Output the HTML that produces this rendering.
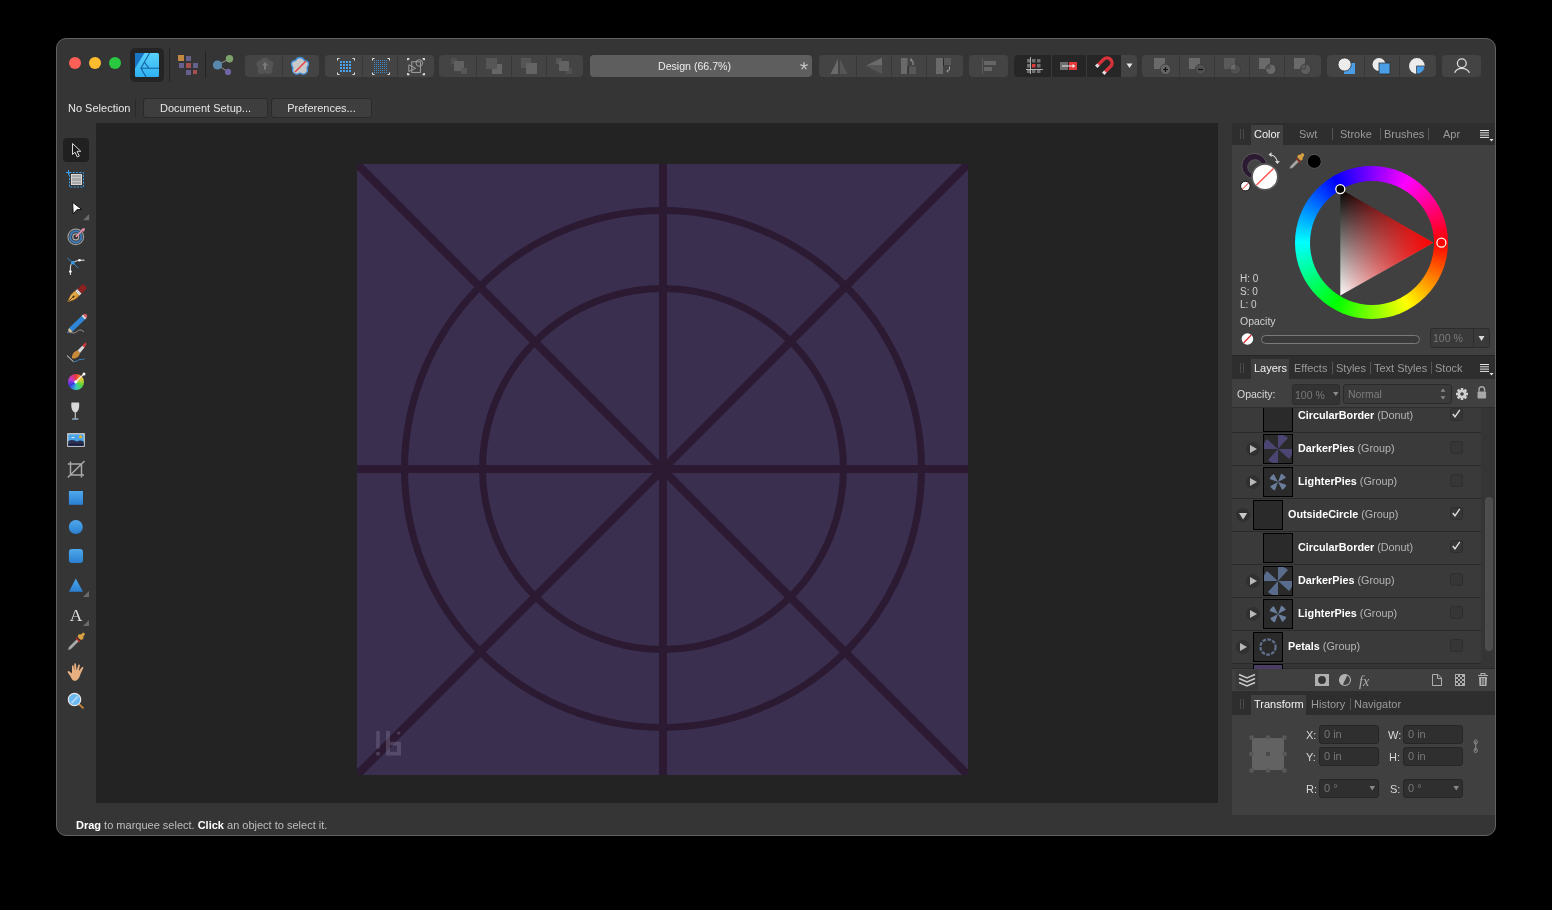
<!DOCTYPE html>
<html><head><meta charset="utf-8">
<style>
*{margin:0;padding:0;box-sizing:border-box}
html,body{width:1552px;height:910px;background:#000;overflow:hidden;font-family:"Liberation Sans",sans-serif;}
.a{position:absolute}
#win{left:56px;top:38px;width:1440px;height:798px;background:#353535;border:1px solid #616161;border-radius:10px;overflow:hidden}
.t{position:absolute;white-space:nowrap;line-height:1}
.t,.lname,.lbl,.fld,.btn,svg{will-change:transform}
.tl{position:absolute;width:12px;height:12px;border-radius:50%;top:57px}
.grp{position:absolute;top:55px;height:22px;background:#444;border-radius:4px}
.dv{position:absolute;top:0;width:1px;height:22px;background:#383838}
.btn{position:absolute;top:98px;height:20px;background:#3e3e3e;border:1px solid #2a2a2a;border-radius:3px;color:#e6e6e6;font-size:11px;text-align:center;line-height:18px}
.tabbar{position:absolute;left:1232px;width:263px;background:#2e2e2e}
.tab{position:absolute;top:0;height:100%;color:#9a9a9a;font-size:11px;line-height:22px}
.tab.on{background:#404040;color:#f0f0f0}
.tsep{position:absolute;width:1px;background:#5a5a5a}
.panel{position:absolute;left:1232px;width:263px;background:#404040}
.row{position:absolute;left:1232px;width:249px;height:33px;background:#3b3b3b;border-bottom:1px solid #2c2c2c}
.thumb{position:absolute;width:30px;height:30px;background:#2a2a2a;border:1px solid #000}
.lname{position:absolute;font-size:10.8px;color:#fff;font-weight:bold;line-height:1;white-space:nowrap}
.lname span{font-weight:normal;color:#b5b5b5}
.chk{position:absolute;left:1450px;width:13px;height:13px;border-radius:3px;background:#363636;border:1px solid #2e2e2e}
.exp{position:absolute;width:14px;height:14px;border-radius:50%;background:#303030}
.exp:after{content:"";position:absolute;left:4px;top:3px;border-left:7px solid #b8b8b8;border-top:4px solid transparent;border-bottom:4px solid transparent}
.fld{position:absolute;height:19px;background:#2f2f2f;border-radius:3px;border:1px solid #262626;color:#777;font-size:11px;line-height:17px;padding-left:4px}
.lbl{position:absolute;color:#d8d8d8;font-size:11px;line-height:1}
</style></head><body>
<div id="win" class="a"></div>

<!-- traffic lights -->
<div class="tl" style="left:69px;background:#fe5f57"></div>
<div class="tl" style="left:89px;background:#febc2e"></div>
<div class="tl" style="left:109px;background:#28c840"></div>


<!-- TOOLBAR -->
<div class="a" style="left:130px;top:48px;width:34px;height:34px;background:#242424;border-radius:5px"></div>
<div class="a" style="left:169px;top:48px;width:1px;height:34px;background:#232323"></div>
<div class="a" style="left:205px;top:51px;width:1px;height:27px;background:#232323"></div>
<div class="grp" style="left:245px;width:74px"><div class="dv" style="left:37px"></div></div>
<div class="grp" style="left:325px;width:109px"><div class="dv" style="left:37px"></div><div class="dv" style="left:72px"></div></div>
<div class="grp" style="left:439px;width:144px"><div class="dv" style="left:37px"></div><div class="dv" style="left:72px"></div><div class="dv" style="left:107px"></div></div>
<div class="grp" style="left:590px;width:222px;background:#5e5e5e"></div>
<div class="t" style="left:658px;top:61px;font-size:10.6px;color:#ececec">Design (66.7%)</div>
<div class="grp" style="left:819px;width:144px"><div class="dv" style="left:37px"></div><div class="dv" style="left:72px"></div><div class="dv" style="left:107px"></div></div>
<div class="grp" style="left:969px;width:39px"></div>
<div class="grp" style="left:1014px;width:123px;background:#444"><div class="a" style="left:0;top:0;width:107px;height:22px;background:#262626;border-radius:4px 0 0 4px"></div><div class="dv" style="left:37px;background:#3a3a3a"></div><div class="dv" style="left:72px;background:#3a3a3a"></div></div>
<div class="grp" style="left:1142px;width:179px"><div class="dv" style="left:37px"></div><div class="dv" style="left:72px"></div><div class="dv" style="left:107px"></div><div class="dv" style="left:142px"></div></div>
<div class="grp" style="left:1327px;width:109px"><div class="dv" style="left:37px"></div><div class="dv" style="left:72px"></div></div>
<div class="grp" style="left:1442px;width:39px"></div>

<svg class="a" style="left:0;top:0" width="1552" height="130" viewBox="0 0 1552 130">
<defs>
<linearGradient id="lg1" x1="0" y1="0" x2="0" y2="1"><stop offset="0" stop-color="#58d3fb"/><stop offset="1" stop-color="#2fb0f2"/></linearGradient>
</defs>
<!-- affinity logo -->
<rect x="135" y="53" width="24" height="24" rx="1.5" fill="url(#lg1)"/>
<path d="M135 53 H144.5 L135 68.5 Z" fill="#1a75c4"/>
<path d="M149.5 53 L141 68.3 L146 77 M141 68.3 H159 M144.3 62 L149 68.3" stroke="#15609f" stroke-width="1.1" fill="none"/>
<!-- persona grid -->
<rect x="178" y="55" width="6" height="6" fill="#c08840"/>
<rect x="186" y="56" width="5" height="5" fill="#66618c"/>
<rect x="179" y="63" width="5" height="5" fill="#66618c"/>
<rect x="186" y="63" width="5" height="5" fill="#a84f4f"/>
<rect x="193" y="63" width="5" height="5" fill="#66618c"/>
<rect x="186" y="70" width="5" height="5" fill="#66618c"/>
<rect x="193" y="70" width="4" height="4" fill="#a84f4f"/>
<!-- share -->
<path d="M217.5 65 L229.5 58.7 M217.5 65 L228 71.9" stroke="#9a9a9a" stroke-width="1"/>
<circle cx="217.5" cy="65" r="4.6" fill="#5a88ac"/>
<circle cx="229.5" cy="58.7" r="3.7" fill="#7ea36a"/>
<circle cx="228" cy="71.9" r="3.1" fill="#6f67a6"/>
<!-- flower icons -->
<defs><path id="flw" d="M265 57.5 C268 57.5 269 59.5 269.5 60.5 C271 60.5 274 61.5 273.5 64.5 C273 66.5 272.5 67.5 272 68 C273 70 272.5 73 269.5 74 C268 74.5 266.5 74 265 73 C263.5 74 262 74.5 260.5 74 C257.5 73 257 70 258 68 C257.5 67.5 257 66.5 256.5 64.5 C256 61.5 259 60.5 260.5 60.5 C261 59.5 262 57.5 265 57.5 Z"/></defs><use href="#flw" fill="#545454"/>
<path d="M265 62 L262 65.5 H264 V69.5 H266 V65.5 H268 Z" fill="#7a7a7a"/>
<use href="#flw" x="35" fill="#c9c9c9" stroke="#3d8fdb" stroke-width="1.3"/>
<path d="M306 61 L295 72" stroke="#e8383a" stroke-width="1.2"/>
<!-- grid buttons -->
<g fill="#4aa3ec">
<rect x="340" y="61" width="2" height="2"/><rect x="343" y="61" width="2" height="2"/><rect x="346" y="61" width="2" height="2"/><rect x="349" y="61" width="2" height="2"/>
<rect x="340" y="64" width="2" height="2"/><rect x="343" y="64" width="2" height="2"/><rect x="346" y="64" width="2" height="2"/><rect x="349" y="64" width="2" height="2"/>
<rect x="340" y="67" width="2" height="2"/><rect x="343" y="67" width="2" height="2"/><rect x="346" y="67" width="2" height="2"/><rect x="349" y="67" width="2" height="2"/>
<rect x="340" y="70" width="2" height="2"/><rect x="343" y="70" width="2" height="2"/><rect x="346" y="70" width="2" height="2"/><rect x="349" y="70" width="2" height="2"/>
</g>
<g fill="#3d8fd6" opacity="0.9">
<rect x="374" y="60" width="14" height="14" fill="url(#dots)"/>
</g>
<pattern id="dots" width="2" height="2" patternUnits="userSpaceOnUse"><rect width="1" height="1" fill="#3d8fd6"/></pattern>
<path d="M337.5 60.5 V58.5 H339.5 M352.5 58.5 H354.5 V60.5 M354.5 72.5 V74.5 H352.5 M339.5 74.5 H337.5 V72.5" stroke="#e6e6e6" stroke-width="1" fill="none"/>
<path d="M372.5 60.5 V58.5 H374.5 M387.5 58.5 H389.5 V60.5 M389.5 72.5 V74.5 H387.5 M374.5 74.5 H372.5 V72.5" stroke="#e6e6e6" stroke-width="1" fill="none"/>
<path d="M407.8 60.2 V58.8 H409.4 M422.6 58.8 H424.2 V60.2 M424.2 73 V74.5 H422.6 M409.4 74.5 H407.8 V73" stroke="#e6e6e6" stroke-width="1.4" fill="none"/>
<g stroke="#a8a8a8" stroke-width="0.9" fill="none">
<rect x="411.8" y="61.8" width="8.6" height="10.6"/>
<circle cx="419.3" cy="63" r="3.3"/>
<path d="M408.8 64.8 V71.5 L415.6 68.3 Z"/>
</g>
<!-- arrange -->
<rect x="451" y="58" width="6" height="6" fill="#505050"/>
<rect x="454" y="61" width="10" height="10" fill="#616161"/>
<rect x="461" y="68" width="6" height="6" fill="#575757"/>
<rect x="492" y="64" width="10" height="10" fill="#666"/>
<rect x="486" y="58" width="11" height="11" fill="#565656"/>
<rect x="521" y="58" width="10" height="10" fill="#555"/>
<rect x="526" y="63" width="11" height="11" fill="#646464"/>
<rect x="556" y="58" width="6" height="6" fill="#555"/>
<rect x="566" y="68" width="6" height="6" fill="#505050"/>
<rect x="559" y="61" width="10" height="10" fill="#626262"/>
<!-- asterisk -->
<path d="M804.0 66.0 L804.00 62.50 M804.0 66.0 L807.33 64.92 M804.0 66.0 L806.06 68.83 M804.0 66.0 L801.94 68.83 M804.0 66.0 L800.67 64.92" stroke="#c8c8c8" stroke-width="1.25" stroke-linecap="round"/>
<!-- flip icons -->
<path d="M838 59 V74 H830.5 Z" fill="#6a6a6a"/>
<path d="M840 59 V74 H847.5 Z" fill="#555"/>
<path d="M866 65.5 L882 57.7 V65.5 Z" fill="#6a6a6a"/>
<path d="M866 66 L882 74 V66 Z" fill="#555"/>
<rect x="901" y="58" width="6.5" height="16" fill="#6a6a6a"/>
<rect x="909" y="66.5" width="7" height="7.5" fill="#585858"/>
<rect x="907.5" y="66" width="1" height="8" fill="#2a2a2a"/>
<path d="M913 65 V61.5 C913 60.5 912 60 910.5 60 M911.8 58.6 L910.3 60 L911.8 61.4" stroke="#a0a0a0" stroke-width="1" fill="none"/>
<rect x="936" y="58" width="7" height="16" fill="#6a6a6a"/>
<rect x="944" y="58" width="7" height="7" fill="#585858"/>
<rect x="943" y="58" width="1" height="8" fill="#2a2a2a"/>
<path d="M949.5 66.5 V69.5 C949.5 70.5 948.5 71 947 71 M948.3 69.6 L946.8 71 L948.3 72.4" stroke="#a0a0a0" stroke-width="1" fill="none"/>
<!-- align -->
<rect x="982" y="58" width="1" height="16" fill="#5a5a5a"/>
<rect x="984" y="61" width="12" height="4" fill="#666"/>
<rect x="984" y="67" width="8" height="4" fill="#666"/>
<!-- snapping grid -->
<g fill="#707070">
<rect x="1027" y="59" width="3.5" height="3.5"/><rect x="1032" y="59" width="3.5" height="3.5"/><rect x="1037" y="59" width="3.5" height="3.5"/>
<rect x="1027" y="64" width="3.5" height="3.5"/><rect x="1037" y="64" width="3.5" height="3.5"/>
<rect x="1027" y="69.5" width="3.5" height="3.5"/><rect x="1032" y="69.5" width="3.5" height="3.5"/><rect x="1037" y="69.5" width="3.5" height="3.5"/>
</g>
<rect x="1032" y="64" width="3.5" height="3.5" fill="#e23a3c"/>
<path d="M1030.5 57 V74 M1026 69.5 H1043" stroke="#d0d0d0" stroke-width="0.8"/>
<rect x="1060" y="62" width="8" height="8" fill="#6e6e6e"/>
<rect x="1069" y="62" width="8" height="8" fill="#e23a3c"/>
<path d="M1062 66 H1074" stroke="#eee" stroke-width="1"/>
<path d="M1072.5 64 L1075.5 66 L1072.5 68 Z" fill="#eee"/>
<!-- magnet -->
<path d="M1098.2 64.8 L1103.6 59.4 A4.95 4.95 0 0 1 1110.6 66.4 L1105.2 71.8" stroke="#d8333a" stroke-width="3.4" fill="none"/>
<path d="M1096.2 66.8 L1098.4 64.6 M1103.2 73.8 L1105.4 71.6" stroke="#e0e0e0" stroke-width="3.4"/>
<path d="M1126.5 63.5 H1132.5 L1129.5 68 Z" fill="#e6e6e6"/>
<!-- boolean -->
<g>
<rect x="1154" y="58" width="11" height="11" fill="#6a6a6a"/>
<circle cx="1165.5" cy="69.3" r="5.2" fill="#666" stroke="#3a3a3a" stroke-width="0.8"/>
<path d="M1163 69.5 H1168 M1165.5 67 V72" stroke="#111" stroke-width="1.2"/>
<rect x="1189" y="58" width="11" height="11" fill="#6a6a6a"/>
<circle cx="1200.5" cy="69.3" r="5.2" fill="#505050" stroke="#3a3a3a" stroke-width="0.8"/>
<path d="M1198 69.5 H1203" stroke="#111" stroke-width="1.2"/>
<rect x="1224" y="58" width="11" height="11" fill="#5a5a5a"/>
<circle cx="1235.4" cy="69.3" r="5.2" fill="#505050" stroke="#3a3a3a" stroke-width="0.8"/>
<path d="M1230.5 69 A5 5 0 0 1 1235 64 V69 Z" fill="#6a6a6a"/>
<rect x="1259" y="58" width="11" height="11" fill="#6a6a6a"/>
<circle cx="1270.8" cy="69.3" r="5.2" fill="#6a6a6a" stroke="#3a3a3a" stroke-width="0.8"/>
<path d="M1266 69 A5 5 0 0 1 1270.5 64 V69 Z" fill="#505050"/>
<rect x="1294" y="58" width="11" height="11" fill="#6a6a6a"/>
<circle cx="1305.6" cy="69.3" r="5.2" fill="#5e5e5e" stroke="#3a3a3a" stroke-width="0.8"/>
<path d="M1301 69 A5 5 0 0 1 1305.5 64 V69 Z" fill="#5a5a5a" stroke="#3a3a3a" stroke-width="0.6"/>
</g>
<!-- arrange 2 -->
<rect x="1344" y="63" width="11" height="11" fill="#4a9ee6"/>
<circle cx="1344.6" cy="64.5" r="6.6" fill="#ececec" stroke="#2f2f2f" stroke-width="0.8"/>
<circle cx="1379" cy="64.5" r="6.5" fill="#ececec"/>
<rect x="1379" y="63" width="11" height="11" fill="#4a9ee6" stroke="#2f2f2f" stroke-width="0.8"/>
<circle cx="1416.9" cy="66" r="7.9" fill="#ececec"/>
<path d="M1416.5 66 H1424.8 A7.9 7.9 0 0 1 1416.5 73.9 Z" fill="#4a9ee6" stroke="#2f2f2f" stroke-width="0.7"/>
<!-- user -->
<circle cx="1461.8" cy="63.3" r="4.4" stroke="#dcdcdc" stroke-width="1.3" fill="none"/>
<path d="M1454.6 72.8 C1456 69.5 1458.5 68.3 1461.8 68.3 C1465 68.3 1467.8 69.5 1469.5 72.8" stroke="#dcdcdc" stroke-width="1.3" fill="none"/>
</svg>

<!-- TOOLS -->
<div class="a" style="left:63px;top:138px;width:25.5px;height:24px;background:#202020;border-radius:4px"></div>
<svg class="a" style="left:56px;top:130px" width="40" height="590" viewBox="56 130 40 590">
<defs>
<linearGradient id="bl" x1="0" y1="0" x2="0" y2="1"><stop offset="0" stop-color="#4fa9ec"/><stop offset="1" stop-color="#2a7fd0"/></linearGradient>
<linearGradient id="gold" x1="0" y1="0" x2="1" y2="1"><stop offset="0" stop-color="#f5d07a"/><stop offset="1" stop-color="#d08a20"/></linearGradient>
</defs>
<!-- pointer -->
<path d="M72.5 143.5 V154.5 L75 152.2 L77.3 157 L79.3 156 L77 151.3 H80.8 Z" fill="#1a1a1a" stroke="#d8d8d8" stroke-width="1" stroke-linejoin="round"/>
<!-- artboard -->
<rect x="69.5" y="172.5" width="14" height="14.5" fill="none" stroke="#3aa0ee" stroke-width="1" stroke-dasharray="2 1.3"/>
<rect x="71.5" y="174.5" width="10" height="10" fill="#a8a8a8" stroke="#d8d8d8" stroke-width="1"/>
<path d="M72 177.5 H81 M72 181.5 H81" stroke="#d0d0d0" stroke-width="0.8"/>
<path d="M68.5 170 V175 M66 172.5 H71" stroke="#3aa0ee" stroke-width="1"/>
<!-- node tool -->
<path d="M72.6 202.3 L81.8 209.4 L76.8 209.8 L73.2 214 Z" fill="#fafafa" stroke="#111" stroke-width="1" stroke-linejoin="round"/>
<path d="M83 220.2 H89.2 V214 Z" fill="#6a6a6a"/>
<!-- contour -->
<circle cx="75.8" cy="236.9" r="7.8" fill="none" stroke="#9a9a9a" stroke-width="1.2"/>
<circle cx="75.8" cy="236.9" r="5.6" fill="none" stroke="#3d7cbc" stroke-width="2"/>
<circle cx="75.8" cy="236.9" r="3" fill="none" stroke="#aaaaaa" stroke-width="1.2"/>
<path d="M75.8 236.9 L83 229.8" stroke="#e890a8" stroke-width="1.6"/>
<path d="M85 228 L81 229 L84 232 Z" fill="#e890a8"/>
<!-- corner tool -->
<path d="M67.4 258 L78.3 268" stroke="#3a8cd0" stroke-width="1"/>
<path d="M70.4 275 V268 C70.4 265 71.5 263 73 262.5 C75 261 79 260 84.5 260.2" stroke="#e8e8e8" stroke-width="1" fill="none"/>
<rect x="71.3" y="261" width="3.3" height="3.3" fill="#3a9ae8"/>
<circle cx="79.5" cy="260.2" r="1.3" fill="#fff"/>
<circle cx="70.4" cy="271.5" r="1.3" fill="#fff"/>
<!-- pen -->
<g transform="translate(67.6 302) rotate(-42.4)">
<path d="M0 0 L6 -2.6 C8 -3.4 11 -3.4 13 -3.1 V3.1 C11 3.4 8 3.4 6 2.6 Z" fill="url(#gold)" stroke="#a86a18" stroke-width="0.5"/>
<path d="M0.5 0 H8" stroke="#4a3010" stroke-width="0.8"/>
<circle cx="8" cy="0" r="1" fill="#3a2a10"/>
<rect x="13" y="-3.1" width="3" height="6.2" fill="#e8e8e8"/>
<path d="M14.5 -3 V3" stroke="#888" stroke-width="0.5"/>
<path d="M16 -3.1 H22 C23.5 -3.1 24 -2 24 0 C24 2 23.5 3.1 22 3.1 H16 Z" fill="#8a2222"/>
</g>
<!-- pencil -->
<path d="M67.5 333 L69 328 L81.5 316 L85 319.5 L72.5 331.5 Z" fill="#2f86d6"/>
<path d="M67.5 333 L69 328 L72.5 331.5 Z" fill="#e8c080"/>
<path d="M67.5 333 L68.2 330.8 L69.7 332.3 Z" fill="#2a5aa0"/>
<path d="M81.5 316 L83 314.5 L86.5 318 L85 319.5 Z" fill="#d8d8d8"/>
<path d="M83 314.5 C84 313.5 85.5 313.5 86.5 314.5 C87.5 315.5 87.5 317 86.5 318 Z" fill="#e05a6a"/>
<path d="M70 332.5 C73 333 75 333.5 77 331.5 C79 329.5 81.5 329.3 84 332" stroke="#aaaaaa" stroke-width="0.8" fill="none"/>
<!-- brush -->
<path d="M67 355.5 L73.5 361.8" stroke="#e0e0e0" stroke-width="1"/>
<path d="M72 358.5 C71.5 354.5 74 351 77.5 350.5 L80 353 C79.5 356.5 76 359 72 358.5 Z" fill="#c88a3a"/>
<path d="M77.5 350.5 L82.5 345.5 L84.5 347.5 L80 353 Z" fill="#d8d8d8"/>
<path d="M82.5 345.5 L85.5 342.5 C86 342 86.5 344 86 345 L84.5 347.5 Z" fill="#e03a3a"/>
<path d="M74 361.5 C77 362 78 359.5 80 359.5 C82 359.5 83 360 84.5 358.5" stroke="#3a8cd0" stroke-width="0.9" fill="none"/>
<!-- color wheel -->
<foreignObject x="67.9" y="373.9" width="15.8" height="15.8"><div style="width:15.8px;height:15.8px;border-radius:50%;background:conic-gradient(from 0deg,#e83838,#e8c838,#58d838,#38c8c8,#3838e8,#c838c8,#e83838)"></div></foreignObject>
<path d="M75.8 381.8 L84 373.9" stroke="#f0f0f0" stroke-width="1.2"/>
<circle cx="75.8" cy="381.8" r="1.6" fill="#fff"/>
<circle cx="84" cy="373.9" r="1.5" fill="#fff"/>
<!-- glass -->
<path d="M71.5 402.5 H79 C79.5 406 79.5 411 75.3 413 C71 411 71 406 71.5 402.5 Z" fill="#d8d8d8"/>
<path d="M75.3 413 V418.5 M72 419 H78.5" stroke="#c8c8c8" stroke-width="1.1"/>
<path d="M73 419.2 H77.5" stroke="#5aa0e0" stroke-width="0.8"/>
<!-- image -->
<rect x="67.2" y="433.2" width="17.6" height="13.6" fill="#dcdcdc"/>
<rect x="68.3" y="434.3" width="15.4" height="11.4" fill="#4aa4e8"/>
<path d="M68.3 441 C72 439 75 440.5 77 441.5 C79.5 440 81.5 440.5 83.7 441.5 V445.7 H68.3 Z" fill="#2a3050"/>
<rect x="68.3" y="443.8" width="15.4" height="1.9" fill="#1a1a3a"/>
<circle cx="80.5" cy="436.8" r="1.5" fill="#f5b020"/>
<path d="M71 438 C72 436.5 74 436.8 75 437.8 Z" fill="#fff"/>
<!-- crop -->
<path d="M70.5 461.5 V475 H84 M67.8 464 H81.5 V477.5 M67.8 477.5 L84.5 461" stroke="#a8a8a8" stroke-width="1.5" fill="none"/>
<!-- rect -->
<rect x="68.9" y="491" width="14.1" height="13.8" fill="url(#bl)"/>
<!-- ellipse -->
<circle cx="75.8" cy="527" r="7" fill="url(#bl)"/>
<!-- rounded rect -->
<rect x="68.9" y="549" width="14.1" height="14" rx="3" fill="url(#bl)"/>
<!-- triangle -->
<path d="M75.8 578.4 L83 591.8 H68.9 Z" fill="url(#bl)"/>
<path d="M83 597 H89 V591 Z" fill="#6a6a6a"/>
<!-- text -->
<text x="76" y="621.3" font-family="Liberation Serif" font-size="17.5" fill="#dedede" text-anchor="middle">A</text>
<path d="M83 626 H89 V620 Z" fill="#6a6a6a"/>
<!-- eyedropper -->
<path d="M68 650 L69 647 L77 639 L79 641 L71 649 Z" fill="#a8a8a8" stroke="#707070" stroke-width="0.5"/>
<path d="M76 638 L80 642" stroke="#c02020" stroke-width="1.3"/>
<path d="M78 637.5 C77 635.5 79 633.5 81 634.5 L82.5 633 C84 632 85.5 633.5 84.5 635 L83.2 636.5 C84.3 638.5 82.3 640.5 80.3 639.5 Z" fill="#d8a040"/>
<!-- hand -->
<path d="M70.5 676.5 L67.8 672.5 C67.3 671.7 68.3 670.7 69.2 671.3 L72 673.5 V666 C72 665 73.5 665 73.6 666 L74.3 671 V664 C74.3 663 76 663 76 664 L76.6 670.5 L78.3 665 C78.6 664 80 664.3 79.9 665.3 L78.7 671 L81.9 667.2 C82.5 666.5 83.8 667.2 83.3 668 L80.5 674 C79.5 677.5 78 680.8 74.5 680.8 C72.5 680.8 71.5 678.5 70.5 676.5 Z" fill="#e8b080"/>
<!-- zoom -->
<path d="M78.8 704 L83.5 708.3" stroke="#c8843a" stroke-width="1.8"/>
<circle cx="74.5" cy="699.5" r="6.2" fill="#6ab8f0" stroke="#e8e8e8" stroke-width="1.2"/>
<path d="M71.5 703 L78 696.5" stroke="#c8e4fa" stroke-width="2" opacity="0.7"/>
</svg>

<!-- canvas -->
<div class="a" style="left:96px;top:123px;width:1122px;height:680px;background:#232323"></div>
<svg class="a" style="left:357px;top:164px" width="611" height="611" viewBox="0 0 611 611">
  <rect width="611" height="611" fill="#3b2f4f"/>
  <g stroke="#2c1a33" fill="none">
    <line x1="0" y1="0" x2="611" y2="611" stroke-width="8"/>
    <line x1="611" y1="0" x2="0" y2="611" stroke-width="8"/>
    <line x1="306" y1="0" x2="306" y2="611" stroke-width="8"/>
    <line x1="0" y1="305" x2="611" y2="305" stroke-width="8"/>
    <circle cx="306" cy="305" r="258.5" stroke-width="7"/>
    <circle cx="306" cy="305" r="180.5" stroke-width="7"/>
  </g>
  <g fill="#9286a9" opacity="0.32" transform="translate(-357 -164)">
    <rect x="376.2" y="731" width="3.6" height="17.6"/>
    <rect x="376.2" y="752" width="3.6" height="3.5"/>
    <path d="M386 731 H390 V741.7 H401 V755.5 H386 Z M390 745.6 V751.8 H397 V745.6 Z" fill-rule="evenodd"/>
    <rect x="397.2" y="731.8" width="3" height="2.6"/>
  </g>
</svg>

<!-- context toolbar -->
<div class="t" style="left:68px;top:103px;font-size:11px;color:#e8e8e8">No Selection</div>
<div class="a" style="left:135px;top:99px;width:1px;height:19px;background:#2a2a2a"></div>
<div class="btn" style="left:143px;width:125px">Document Setup...</div>
<div class="btn" style="left:271px;width:101px">Preferences...</div>

<!-- status bar -->
<div class="t" style="left:76px;top:820px;font-size:11px;color:#bdbdbd"><b style="color:#fff">Drag</b> to marquee select. <b style="color:#fff">Click</b> an object to select it.</div>

<!-- RIGHT PANEL -->
<div class="tabbar" style="top:123px;height:22px"></div>
<div class="panel" style="top:145px;height:210px"></div>
<div class="a" style="left:1232px;top:355px;width:263px;height:1px;background:#262626"></div>
<div class="tabbar" style="top:356px;height:23px"></div>
<div class="panel" style="top:379px;height:29px"></div>
<div class="a" style="left:1232px;top:408px;width:263px;height:256px;background:#353535"></div>
<div class="a" style="left:1232px;top:664px;width:263px;height:5px;background:#353535"></div><div class="a" style="left:1232px;top:668px;width:263px;height:1px;background:#2a2a2a"></div><div class="panel" style="top:669px;height:22px;background:#404040"></div><div class="a" style="left:1236px;top:670px;width:22px;height:20px;background:#393939"></div>
<div class="tabbar" style="top:691px;height:24px"></div>
<div class="panel" style="top:715px;height:100px"></div>

<!-- COLOR PANEL -->
<div class="a" style="left:1251px;top:125px;width:32px;height:20px;background:#404040"></div>
<div class="t" style="left:1254px;top:129px;font-size:11px;color:#f2f2f2">Color</div>
<div class="t" style="left:1299px;top:129px;font-size:11px;color:#9a9a9a">Swt</div>
<div class="a" style="left:1332px;top:128px;width:1px;height:12px;background:#555"></div>
<div class="t" style="left:1340px;top:129px;font-size:11px;color:#9a9a9a">Stroke</div>
<div class="a" style="left:1380px;top:128px;width:1px;height:12px;background:#555"></div>
<div class="t" style="left:1384px;top:129px;font-size:11px;color:#9a9a9a">Brushes</div>
<div class="a" style="left:1428px;top:128px;width:1px;height:12px;background:#555"></div>
<div class="t" style="left:1443px;top:129px;font-size:11px;color:#9a9a9a">Apr</div>
<div class="a" style="left:1332px;top:128px;width:1px;height:12px;background:#555"></div>
<div class="t" style="left:1240px;top:316px;font-size:10.5px;color:#cfcfcf">Opacity</div>
<div class="t" style="left:1240px;top:272px;font-size:10px;color:#cfcfcf;line-height:13.2px">H: 0<br>S: 0<br>L: 0</div>
<div class="a" style="left:1261px;top:335px;width:159px;height:9px;border:1px solid #7a7a7a;border-radius:5px;background:#3a3a3a"></div>
<div class="a" style="left:1430px;top:328px;width:60px;height:20px;border:1px solid #2c2c2c;border-radius:3px;background:#3a3a3a"></div>
<div class="a" style="left:1473px;top:329px;width:1px;height:18px;background:#2c2c2c"></div>
<div class="t" style="left:1433px;top:333px;font-size:10.5px;color:#7a7a7a">100 %</div>
<div class="a" style="left:1295px;top:166px;width:153px;height:153px;border-radius:50%;background:conic-gradient(from 90deg,#ff0000,#ffff00,#00ff00,#00ffff,#0000ff,#ff00ff,#ff0000)"></div>
<div class="a" style="left:1309.5px;top:180.5px;width:124px;height:124px;border-radius:50%;background:#404040"></div>
<svg class="a" style="left:1232px;top:145px" width="263" height="210" viewBox="1232 145 263 210">
<defs>
<linearGradient id="tri1" gradientUnits="userSpaceOnUse" x1="1340" y1="242.5" x2="1433" y2="242.5"><stop offset="0" stop-color="#ff0000" stop-opacity="0"/><stop offset="1" stop-color="#ff0000" stop-opacity="1"/></linearGradient>
<linearGradient id="tri2" gradientUnits="userSpaceOnUse" x1="1340" y1="189" x2="1340" y2="296"><stop offset="0" stop-color="#000"/><stop offset="1" stop-color="#fff"/></linearGradient>
</defs>
<path d="M1340.3 189.1 L1433.4 242.7 L1340.3 295.5 Z" fill="url(#tri2)"/>
<path d="M1340.3 189.1 L1433.4 242.7 L1340.3 295.5 Z" fill="url(#tri1)" style="mix-blend-mode:normal"/>
<circle cx="1340.3" cy="189.1" r="4.5" fill="#000" stroke="#fff" stroke-width="1.3"/>
<circle cx="1441.4" cy="242.7" r="4.5" fill="none" stroke="#fff" stroke-width="1.3"/>
<!-- swatches -->
<circle cx="1254.3" cy="166" r="12.6" fill="#2c1a33" stroke="#5a5a5a" stroke-width="1"/>
<circle cx="1255" cy="167" r="7.3" fill="#444" stroke="#5a5a5a" stroke-width="0.9"/>
<circle cx="1264.9" cy="176.9" r="13.6" fill="#404040"/>
<circle cx="1264.9" cy="176.9" r="13.1" fill="none" stroke="#5e5e5e" stroke-width="1.1"/>
<circle cx="1264.9" cy="176.9" r="12.1" fill="#fff"/>
<path d="M1256.5 185 L1273.5 168.5" stroke="#ff4a4a" stroke-width="1.3"/>
<circle cx="1245.4" cy="186.1" r="4.8" fill="#fff" stroke="#111" stroke-width="1"/>
<path d="M1242.3 189.3 L1248.5 183" stroke="#e02020" stroke-width="1"/>
<path d="M1270 154.8 C1273 154.8 1276 157.5 1277.5 161.5" stroke="#d8d8d8" stroke-width="1.1" fill="none"/>
<path d="M1268.5 154.5 L1271.5 152.3 L1271.5 157 Z M1275 161 L1280 161.3 L1277.3 164 Z" fill="#d8d8d8"/>
<!-- eyedropper -->
<path d="M1289.5 168.5 L1290.5 166 L1297 159.5 L1299 161.5 L1292.5 168 Z" fill="#a8a8a8" stroke="#606060" stroke-width="0.4"/>
<path d="M1296 158.3 L1300.5 162.8" stroke="#a02a20" stroke-width="1.2"/>
<path d="M1297.5 157.5 C1297 155.5 1298.5 154.5 1300 155 L1301.5 153.6 C1303 152.5 1305 154.5 1304 156 L1302.6 157.6 C1303.4 159.4 1302 160.8 1300.3 160.5 Z" fill="#d8a040"/>
<circle cx="1314.3" cy="161.4" r="7" fill="#000" stroke="#555" stroke-width="1"/>
<!-- opacity none -->
<circle cx="1247.4" cy="339" r="5.8" fill="#fff"/>
<path d="M1243.6 343 L1251.2 335" stroke="#e02828" stroke-width="1.2"/>
</svg>

<svg class="a" style="left:1232px;top:123px" width="263" height="600" viewBox="1232 123 263 600">
<g id="grip"><path d="M1240.5 129 V139 M1243.5 129 V139" stroke="#4a4a4a" stroke-width="1"/></g>
<use href="#grip" y="234"/>
<use href="#grip" y="570"/>
<g id="menu"><path d="M1480 130.5 H1489 M1480 132.8 H1489 M1480 135.1 H1489 M1480 137.4 H1489" stroke="#e8e8e8" stroke-width="1"/><path d="M1489.5 139 H1493.5 L1491.5 141.5 Z" fill="#e8e8e8"/></g>
<use href="#menu" y="234"/>
<path d="M1478.5 336 H1484.5 L1481.5 341 Z" fill="#d8d8d8"/>
</svg>

<!-- LAYERS PANEL -->
<div class="a" style="left:1251px;top:359px;width:38px;height:20px;background:#404040"></div>
<div class="t" style="left:1254px;top:363px;font-size:11px;color:#f2f2f2">Layers</div>
<div class="t" style="left:1294px;top:363px;font-size:11px;color:#9a9a9a">Effects</div>
<div class="a" style="left:1332px;top:362px;width:1px;height:12px;background:#555"></div>
<div class="t" style="left:1336px;top:363px;font-size:11px;color:#9a9a9a">Styles</div>
<div class="a" style="left:1370px;top:362px;width:1px;height:12px;background:#555"></div>
<div class="t" style="left:1374px;top:363px;font-size:11px;color:#9a9a9a">Text Styles</div>
<div class="a" style="left:1431px;top:362px;width:1px;height:12px;background:#555"></div>
<div class="t" style="left:1435px;top:363px;font-size:11px;color:#9a9a9a">Stock</div>
<div class="t" style="left:1237px;top:389px;font-size:10.5px;color:#d8d8d8">Opacity:</div>
<div class="a" style="left:1292px;top:384px;width:48px;height:21px;background:#333;border:1px solid #2c2c2c;border-radius:3px"></div>
<div class="t" style="left:1295px;top:390px;font-size:10.5px;color:#7a7a7a">100 %</div>
<div class="a" style="left:1343px;top:384px;width:109px;height:20px;background:#3a3a3a;border:1px solid #2a2a2a;border-radius:3px"></div>
<div class="t" style="left:1348px;top:389px;font-size:10.5px;color:#7e7e7e">Normal</div>
<!-- list -->
<div class="a" style="left:1232px;top:408px;width:249px;height:256px;background:#3a3a3a;overflow:hidden">
  <div class="a" style="left:0;top:24px;width:249px;height:1px;background:#2a2a2a"></div>
  <div class="a" style="left:0;top:57px;width:249px;height:1px;background:#2a2a2a"></div>
  <div class="a" style="left:0;top:90px;width:249px;height:1px;background:#2a2a2a"></div>
  <div class="a" style="left:0;top:123px;width:249px;height:1px;background:#2a2a2a"></div>
  <div class="a" style="left:0;top:156px;width:249px;height:1px;background:#2a2a2a"></div>
  <div class="a" style="left:0;top:189px;width:249px;height:1px;background:#2a2a2a"></div>
  <div class="a" style="left:0;top:222px;width:249px;height:1px;background:#2a2a2a"></div>
  <div class="a" style="left:0;top:255px;width:249px;height:1px;background:#2a2a2a"></div>
</div>
<div class="a" style="left:1485px;top:497px;width:8px;height:154px;background:#4d4d4d;border-radius:4px"></div>
<div class="a" style="left:1232px;top:407px;width:263px;height:1px;background:#2e2e2e"></div>
<!-- thumbs -->
<div class="thumb" style="left:1263px;top:408px;height:24px;border-top:none"></div>
<div class="thumb" style="left:1263px;top:434px"></div>
<div class="thumb" style="left:1263px;top:467px"></div>
<div class="thumb" style="left:1253px;top:500px"></div>
<div class="thumb" style="left:1263px;top:533px"></div>
<div class="thumb" style="left:1263px;top:566px"></div>
<div class="thumb" style="left:1263px;top:599px"></div>
<div class="thumb" style="left:1253px;top:632px"></div>
<div class="a" style="left:1253px;top:664px;width:30px;height:5px;background:#000"><div class="a" style="left:1px;top:1px;width:28px;height:4px;background:#4a3d63"></div></div>
<svg class="a" style="left:1232px;top:408px" width="250" height="256" viewBox="1232 408 250 256"><clipPath id="c1"><rect x="1264" y="435" width="28" height="28"/></clipPath><g clip-path="url(#c1)"><path d="M1278.0 449.0 L1278.0 434.0 A15.0 15.0 0 0 1 1288.0 437.9 Z M1278.0 449.0 L1293.0 449.0 A15.0 15.0 0 0 1 1289.1 459.0 Z M1278.0 449.0 L1278.0 464.0 A15.0 15.0 0 0 1 1268.0 460.1 Z M1278.0 449.0 L1263.0 449.0 A15.0 15.0 0 0 1 1266.9 439.0 Z" fill="#4a4572"/></g><path d="M1278.0 482.0 L1281.1 473.5 A9.0 9.0 0 0 1 1285.9 477.8 Z M1278.0 482.0 L1286.5 485.1 A9.0 9.0 0 0 1 1282.2 489.9 Z M1278.0 482.0 L1274.9 490.5 A9.0 9.0 0 0 1 1270.1 486.2 Z M1278.0 482.0 L1269.5 478.9 A9.0 9.0 0 0 1 1273.8 474.1 Z" fill="#6a7d9a"/><clipPath id="c2"><rect x="1264" y="567" width="28" height="28"/></clipPath><g clip-path="url(#c2)"><path d="M1278.0 581.0 L1278.0 566.0 A15.0 15.0 0 0 1 1288.0 569.9 Z M1278.0 581.0 L1293.0 581.0 A15.0 15.0 0 0 1 1289.1 591.0 Z M1278.0 581.0 L1278.0 596.0 A15.0 15.0 0 0 1 1268.0 592.1 Z M1278.0 581.0 L1263.0 581.0 A15.0 15.0 0 0 1 1266.9 571.0 Z" fill="#5a6c8c"/></g><path d="M1278.0 614.0 L1281.1 605.5 A9.0 9.0 0 0 1 1285.9 609.8 Z M1278.0 614.0 L1286.5 617.1 A9.0 9.0 0 0 1 1282.2 621.9 Z M1278.0 614.0 L1274.9 622.5 A9.0 9.0 0 0 1 1270.1 618.2 Z M1278.0 614.0 L1269.5 610.9 A9.0 9.0 0 0 1 1273.8 606.1 Z" fill="#6a7d9a"/><circle cx="1268" cy="647" r="7.6" fill="none" stroke="#62708e" stroke-width="2.2" stroke-dasharray="3.6 1.4"/><circle cx="1278" cy="416" r="12" fill="none" stroke="#3a2845" stroke-width="0.8" stroke-dasharray="1 2"/><circle cx="1268" cy="515" r="12" fill="none" stroke="#3a2845" stroke-width="0.8" stroke-dasharray="1 2"/><circle cx="1278" cy="548" r="12" fill="none" stroke="#3a2845" stroke-width="0.8" stroke-dasharray="1 2"/></svg>
<!-- names -->
<div class="lname" style="left:1298px;top:410px">CircularBorder <span>(Donut)</span></div>
<div class="lname" style="left:1298px;top:443px">DarkerPies <span>(Group)</span></div>
<div class="lname" style="left:1298px;top:476px">LighterPies <span>(Group)</span></div>
<div class="lname" style="left:1288px;top:509px">OutsideCircle <span>(Group)</span></div>
<div class="lname" style="left:1298px;top:542px">CircularBorder <span>(Donut)</span></div>
<div class="lname" style="left:1298px;top:575px">DarkerPies <span>(Group)</span></div>
<div class="lname" style="left:1298px;top:608px">LighterPies <span>(Group)</span></div>
<div class="lname" style="left:1288px;top:641px">Petals <span>(Group)</span></div>
<!-- checkboxes -->
<div class="chk" style="top:408px"></div>
<div class="chk" style="top:441px"></div>
<div class="chk" style="top:474px"></div>
<div class="chk" style="top:507px"></div>
<div class="chk" style="top:540px"></div>
<div class="chk" style="top:573px"></div>
<div class="chk" style="top:606px"></div>
<div class="chk" style="top:639px"></div>
<!-- expanders -->
<div class="exp" style="left:1246px;top:442px"></div>
<div class="exp" style="left:1246px;top:475px"></div>
<div class="exp" style="left:1246px;top:574px"></div>
<div class="exp" style="left:1246px;top:607px"></div>
<div class="exp" style="left:1236px;top:640px"></div>
<div class="a" style="left:1236px;top:508px;width:14px;height:14px;border-radius:50%;background:#303030"></div>
<svg class="a" style="left:1232px;top:380px" width="263" height="300" viewBox="1232 380 263 300">
<path d="M1239 513 H1247.2 L1243.1 519.6 Z" fill="#c8c8c8"/>
<!-- checks -->
<path id="ck" d="M1452.8 414 L1455 416.8 L1459.8 409.8" stroke="#dedede" stroke-width="1.4" fill="none"/>
<use href="#ck" y="99"/>
<use href="#ck" y="132"/>
<!-- gear -->
<g transform="translate(1462 394)">
<circle r="4.3" fill="#d0d0d0"/>
<g fill="#d0d0d0"><rect x="-1.3" y="-6" width="2.6" height="12"/><rect x="-1.3" y="-6" width="2.6" height="12" transform="rotate(45)"/><rect x="-1.3" y="-6" width="2.6" height="12" transform="rotate(90)"/><rect x="-1.3" y="-6" width="2.6" height="12" transform="rotate(135)"/></g>
<circle r="1.8" fill="#404040"/>
</g>
<!-- lock -->
<path d="M1479 391.5 V389.5 A2.8 2.8 0 0 1 1484.6 389.5 V391.5" stroke="#a8a8a8" stroke-width="1.4" fill="none"/>
<rect x="1477.5" y="391.5" width="8.6" height="7" rx="1" fill="#a8a8a8"/>
<!-- normal arrows -->
<path d="M1440.6 391.8 L1443 388.6 L1445.4 391.8 Z M1440.6 396.2 L1443 399.4 L1445.4 396.2 Z" fill="#8a8a8a"/>
<path d="M1333 392 H1338.5 L1335.75 396 Z" fill="#8a8a8a"/>
</svg>

<!-- LAYER TOOLBAR + TRANSFORM -->
<svg class="a" style="left:1232px;top:664px" width="263" height="160" viewBox="1232 664 263 160">
<path d="M1239 674.5 L1247 678 L1255 674.5 M1239 678.5 L1247 682 L1255 678.5 M1239 682.5 L1247 686 L1255 682.5" stroke="#c8c8c8" stroke-width="1.6" fill="none"/>
<rect x="1315" y="674" width="14" height="12" fill="#b0b0b0"/>
<circle cx="1322" cy="680" r="3.9" fill="#353535"/>
<circle cx="1345" cy="680" r="5.5" fill="#404040" stroke="#b0b0b0" stroke-width="1.1"/>
<path d="M1347.5 675 L1342.5 685.3 A5.5 5.5 0 0 1 1347.5 675 Z" fill="#b0b0b0"/>
<text x="1359" y="685.5" font-family="Liberation Serif" font-style="italic" font-size="14" fill="#b0b0b0">fx</text>
<path d="M1432.5 674.5 H1438 L1441.5 678 V685.5 H1432.5 Z M1437.5 674.5 V678.5 H1441.5" stroke="#b0b0b0" stroke-width="1" fill="none"/>
<rect x="1455" y="674" width="10" height="12" fill="#b0b0b0"/>
<path d="M1456 675h2v2h-2zM1460 675h2v2h-2zM1458 677h2v2h-2zM1462 677h2v2h-2zM1456 679h2v2h-2zM1460 679h2v2h-2zM1458 681h2v2h-2zM1462 681h2v2h-2zM1456 683h2v2h-2zM1460 683h2v2h-2z" fill="#3a3a3a"/>
<path d="M1478 675.5 H1488 M1481 675.5 V673.5 H1485 V675.5" stroke="#b0b0b0" stroke-width="1.2" fill="none"/>
<path d="M1479 677 H1487 L1486.5 686 H1479.5 Z" fill="#b0b0b0"/>
<path d="M1481.5 678 V685 M1483 678 V685 M1484.5 678 V685" stroke="#404040" stroke-width="0.7"/>
</svg>
<div class="a" style="left:1251px;top:695px;width:55px;height:20px;background:#404040"></div>
<div class="t" style="left:1254px;top:699px;font-size:11px;color:#f2f2f2">Transform</div>
<div class="t" style="left:1311px;top:699px;font-size:11px;color:#9a9a9a">History</div>
<div class="a" style="left:1350px;top:698px;width:1px;height:12px;background:#555"></div>
<div class="t" style="left:1354px;top:699px;font-size:11px;color:#9a9a9a">Navigator</div>
<div class="lbl" style="left:1306px;top:730px">X:</div>
<div class="lbl" style="left:1306px;top:752px">Y:</div>
<div class="lbl" style="left:1306px;top:784px">R:</div>
<div class="lbl" style="left:1388px;top:730px">W:</div>
<div class="lbl" style="left:1389px;top:752px">H:</div>
<div class="lbl" style="left:1390px;top:784px">S:</div>
<div class="fld" style="left:1319px;top:725px;width:60px">0 in</div>
<div class="fld" style="left:1319px;top:747px;width:60px">0 in</div>
<div class="fld" style="left:1319px;top:779px;width:60px">0 °</div>
<div class="fld" style="left:1403px;top:725px;width:60px">0 in</div>
<div class="fld" style="left:1403px;top:747px;width:60px">0 in</div>
<div class="fld" style="left:1403px;top:779px;width:60px">0 °</div>
<svg class="a" style="left:1232px;top:715px" width="263" height="100" viewBox="1232 715 263 100">
<rect x="1252" y="738" width="32" height="32" fill="#626262"/>
<g fill="#585858">
<rect x="1249.5" y="735.5" width="4" height="4"/><rect x="1266" y="735.5" width="4" height="4"/><rect x="1282.5" y="735.5" width="4" height="4"/>
<rect x="1249.5" y="752" width="4" height="4"/><rect x="1282.5" y="752" width="4" height="4"/>
<rect x="1249.5" y="768.5" width="4" height="4"/><rect x="1266" y="768.5" width="4" height="4"/><rect x="1282.5" y="768.5" width="4" height="4"/>
</g>
<rect x="1266" y="752" width="4" height="4" fill="#4a4a4a"/>
<path d="M1369.5 786 H1375 L1372.25 790.5 Z M1453.5 786 H1459 L1456.25 790.5 Z" fill="#8a8a8a"/>
<path d="M1475.7 741.5 V751" stroke="#8a8a8a" stroke-width="1"/>
<ellipse cx="1475.7" cy="742" rx="1.6" ry="2.2" fill="none" stroke="#8a8a8a" stroke-width="1"/>
<ellipse cx="1475.7" cy="750.5" rx="1.6" ry="2.2" fill="none" stroke="#8a8a8a" stroke-width="1"/>
</svg>

</body></html>
